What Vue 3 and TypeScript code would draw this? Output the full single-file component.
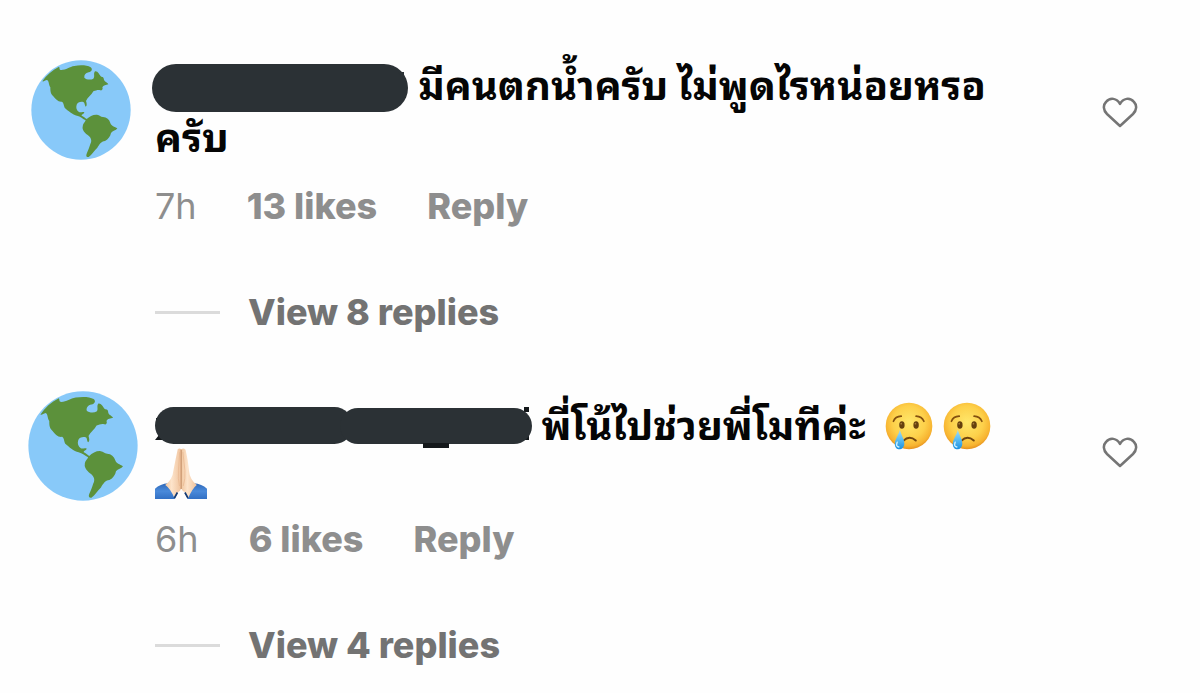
<script setup lang="ts">
interface Comment {
  id: number
  text: string
  tears: number
  pray: boolean
  age: string
  likes: string
  replies: string
}

const comments: Comment[] = [
  { id: 1, text: 'มีคนตกน้ำครับ ไม่พูดไรหน่อยหรอครับ', tears: 0, pray: false, age: '7h', likes: '13 likes', replies: 'View 8 replies' },
  { id: 2, text: 'พี่โน้ไปช่วยพี่โมทีค่ะ', tears: 2, pray: true, age: '6h', likes: '6 likes', replies: 'View 4 replies' },
]
</script>

<template>
  <main class="thread">
    <article v-for="c in comments" :key="c.id" class="comment" :class="{ second: c.id === 2 }">
      <div class="avatar-cell">
        <svg class="avatar" viewBox="32 26 300 300" aria-hidden="true">
          <circle cx="182" cy="176" r="149" fill="#88c9f9" />
          <path fill="#5c913b" d="M66 90C78 72 95 57 116 46C119 50 116 56 123 56C137 56 148 46 162 44C178 41 200 41 211 48C218 54 214 61 205 63C195 65 191 72 192 79C197 85 211 87 219 82C225 76 218 67 224 60C234 59 236 71 243 76C249 76 250 79 251 85C253 92 263 94 264 99C257 101 249 101 246 108C249 113 245 119 240 117C232 115 227 118 219 120C214 130 202 138 197 149C199 155 201 163 196 166C192 161 194 154 189 152C181 150 171 153 169 160C166 169 169 177 176 182C181 184 187 180 192 183C192 188 183 189 184 193C190 196 194 199 199 203C207 195 219 189 230 190C239 191 240 196 248 197C259 198 267 204 270 215C272 224 283 226 291 231C287 238 277 238 272 245C270 255 264 264 254 269C242 270 237 280 231 289C222 297 215 310 205 317C199 318 196 314 199 307C203 297 207 289 210 278C216 268 212 257 201 250C192 244 185 233 187 226C187 217 193 215 196 207C188 203 180 195 170 193C157 190 143 178 133 169C130 162 130 153 125 151C114 153 105 143 99 135C90 128 90 117 90 108C84 99 87 89 80 86C74 87 70 92 66 90Z" />
        </svg>
      </div>
      <div class="body">
        <p class="text">
          <svg v-if="c.id === 1" class="mask wide" viewBox="0 0 257 48" aria-hidden="true">
            <rect width="256" height="48" rx="24" fill="#2b3135" /><path d="M246 8h6v8z" fill="#2b3135" />
          </svg>
          <svg v-else class="mask long" viewBox="0 0 377 42" aria-hidden="true">
            <path d="M1 11h3v3H1zM0 33l4-5 5 5zM369 0h5v5h-5zM369 28h5v5h-5z" fill="#14181b" />
            <rect y="0" width="198" height="37" rx="18.500" fill="#2b3135" />
            <rect x="185" y="1" width="192" height="36" rx="18" fill="#2b3135" />
            <path d="M268 36h26v5h-26z" fill="#14181b" />
          </svg>
          {{ c.text }}
          <svg v-for="n in c.tears" :key="n" class="emoji" viewBox="0 0 142 142" role="img" aria-label="Crying face">
            <defs>
              <radialGradient :id="`face-${n}`" cx="50%" cy="42%" r="58%">
                <stop offset="0" stop-color="#ffe76a" /><stop offset=".6" stop-color="#fdd04a" /><stop offset=".88" stop-color="#f7b330" /><stop offset="1" stop-color="#e58f1d" />
              </radialGradient>
              <linearGradient :id="`tear-${n}`" x2="0" y2="1">
                <stop offset="0" stop-color="#a5ddf8" /><stop offset=".5" stop-color="#5bbdf2" /><stop offset="1" stop-color="#1a8fe0" />
              </linearGradient>
            </defs>
            <circle cx="71" cy="71" r="69" :fill="`url(#face-${n})`" />
            <g fill="none" stroke="#84500f" stroke-width="5" stroke-linecap="round">
              <path d="M25 57Q30 43 48 42M92 42Q109 43 115 57" />
            </g>
            <ellipse cx="50" cy="68" rx="8" ry="11" fill="#65400e" />
            <ellipse cx="92" cy="68" rx="8" ry="11" fill="#65400e" />
            <circle cx="48" cy="64" r="2.500" fill="#a77a38" /><circle cx="90" cy="64" r="2.500" fill="#a77a38" />
            <path d="M54 115Q72 97 91 114" fill="none" stroke="#71450e" stroke-width="6" stroke-linecap="round" />
            <path d="M44 82C48 99 58 110 57 124C56 145 29 146 29 124C29 110 40 99 44 82Z" :fill="`url(#tear-${n})`" />
            <path d="M36 119Q31 132 41 133" fill="none" stroke="#d6f3ff" stroke-width="4" stroke-linecap="round" />
          </svg>
          <svg v-if="c.pray" class="pray" viewBox="0 0 153 153" role="img" aria-label="Folded hands">
            <defs>
              <linearGradient id="skin"><stop offset="0" stop-color="#f1c7a0" /><stop offset=".4" stop-color="#fde4cb" /><stop offset="1" stop-color="#efc29c" /></linearGradient>
              <linearGradient id="cuff" x2="0" y2="1"><stop offset="0" stop-color="#2e68b8" /><stop offset=".5" stop-color="#4a8ada" /><stop offset="1" stop-color="#3270c4" /></linearGradient>
            </defs>
            <path d="M0 120Q15 106 39 104Q53 117 66 131L58 150H0ZM153 120Q138 106 114 104Q101 117 88 131L96 150H153Z" fill="url(#cuff)" />
            <path d="M67 3Q73-1 77 4V119Q75 126 68 130L57 147Q45 119 30 109Q52 92 54 67Q61 30 67 3Z" fill="url(#skin)" />
            <path d="M77 4Q84-1 90 5Q97 33 100 67Q102 92 123 109Q110 119 98 147L88 130Q80 126 77 119Z" fill="url(#skin)" />
            <path d="M77 5V121" stroke="#c28b62" stroke-width="3" />
            <path d="M73 12L69 65Q67 91 72 112M82 12L88 66Q90 91 83 112" fill="none" stroke="#e8b58d" stroke-width="2" />
            <path d="M57 147L66 131M97 147L88 131" stroke="#163b73" stroke-width="5" />
          </svg>
        </p>
        <div class="meta">
          <time>{{ c.age }}</time>
          <button type="button">{{ c.likes }}</button>
          <button type="button">Reply</button>
        </div>
        <button type="button" class="replies"><span class="rule"></span>{{ c.replies }}</button>
      </div>
      <button type="button" class="like" aria-label="Like">
        <svg viewBox="0 0 36 32" aria-hidden="true">
          <path d="M18 29L5 17C1 13 1 8 4 5C8 0 15 1 18 7C21 1 28 0 32 5C35 8 35 13 31 17Z" fill="none" stroke="#757575" stroke-width="2.500" stroke-linejoin="round" />
        </svg>
      </button>
    </article>
  </main>
</template>

<style>
body { margin: 0; background: #fefefe; }
</style>

<style scoped>
.thread {
  padding: 60px 62px 0 0;
  font-family: Inter, "Noto Sans Thai Looped", Loma, Garuda, Umpush, Waree, "Noto Sans", sans-serif;
  font-size: 36px;
  line-height: 40px;
}
.comment {
  display: grid;
  grid-template-columns: 155px minmax(0, 850px) 1fr;
}
.comment + .comment { margin-top: 68px; }
.avatar-cell { padding-left: 31px; }
.avatar { display: block; width: 100px; height: 100px; }
.second .avatar-cell { padding-left: 28px; margin-top: -9px; }
.second .avatar { width: 110px; height: 110px; }
.text {
  margin: 0 0 22px;
  color: #050505;
  font-size: 40px;
  font-weight: 700;
  line-height: 52px;
}
.second .text { margin-bottom: 19px; }
.mask { vertical-align: top; }
.wide { width: 257px; height: 48px; margin: 4px 0 0 -3px; }
.long { width: 377px; height: 42px; margin-top: 7px; }
.emoji { width: 48px; height: 48px; margin: 2px 0 0 10px; vertical-align: top; }
.pray { display: block; width: 52px; height: 52px; margin-top: -4px; }
.meta { display: flex; gap: 50px; color: #8e8e8e; }
button {
  padding: 0;
  border: 0;
  background: none;
  color: inherit;
  font: inherit;
  font-weight: 800;
  cursor: pointer;
}
.replies { display: flex; align-items: center; gap: 28px; margin-top: 66px; color: #737373; }
.rule { width: 65px; height: 3px; background: #dbdbdb; }
.like { align-self: start; justify-self: end; margin-top: 37px; }
.like svg { display: block; width: 36px; height: 32px; }
</style>
